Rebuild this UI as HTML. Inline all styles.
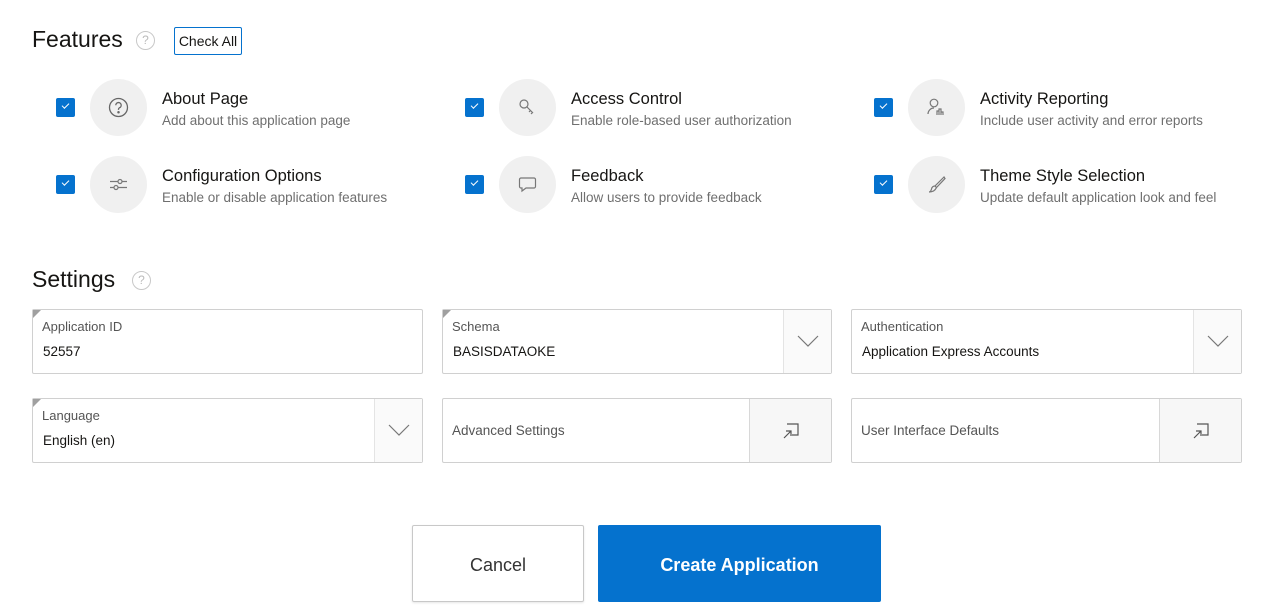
<!DOCTYPE html>
<html><head><meta charset="utf-8"><style>
*{box-sizing:border-box;margin:0;padding:0}
body{width:1288px;height:615px;background:#fff;font-family:"Liberation Sans",sans-serif;color:#161513;position:relative;overflow:hidden}
.a{position:absolute}
h2{position:absolute;font-weight:normal;font-size:23px;color:#161513}
.help{position:absolute;width:19px;height:19px;border:1.5px solid #c8c8c8;border-radius:50%;color:#bbb;font-size:12px;text-align:center;line-height:16px}
.cb{position:absolute;width:19px;height:19px;background:#0572ce;border-radius:2px}
.cb:after{content:"";position:absolute;left:6px;top:5px;width:6px;height:3px;border-left:1px solid #fff;border-bottom:1px solid #fff;transform:rotate(-45deg)}
.ic{position:absolute;width:57px;height:57px;border-radius:50%;background:#f0f0f0}
.ic svg{position:absolute;left:18px;top:18px}
.t{position:absolute;font-size:16.5px;color:#161513}
.d{position:absolute;font-size:13.5px;color:#6f6f6f}
.f{position:absolute;border:1px solid #d0d0d0;border-radius:2px;background:#fff;height:65px}
.f:before{content:"";position:absolute;left:0;top:0;border-top:8px solid #a0a0a0;border-right:8px solid transparent}
.f.n:before{display:none}
.lb{position:absolute;left:9px;top:9px;font-size:13px;color:#555}
.v{position:absolute;left:10px;top:34px;font-size:13.5px;color:#161513}
.dd{position:absolute;right:0;top:0;width:48px;height:63px;border-left:1px solid #e4e4e4;background:#fafafa}
.dd svg{position:absolute;left:13px;top:24px}
.pp{position:absolute;right:0;top:0;width:82px;height:63px;border-left:1px solid #d8d8d8;background:#f7f7f7}
.pp svg{position:absolute;left:32px;top:23px}
</style></head><body>
<h2 style="left:32px;top:26px">Features</h2>
<div class="help" style="left:136px;top:31px">?</div>
<div class="a" style="left:174px;top:27px;width:68px;height:28px;border:1px solid #0572ce;border-radius:2px;font-size:14px;line-height:26px;text-align:center;color:#161513">Check All</div>

<div class="cb" style="left:56px;top:98px"></div>
<div class="ic" style="left:90px;top:79px"><svg width="21" height="21" viewBox="0 0 21 21" fill="none" stroke="#666" stroke-width="1.3"><circle cx="10.5" cy="10.5" r="9"/><path d="M7.8 8.3a2.7 2.7 0 1 1 3.6 2.5c-.6.3-.9.8-.9 1.5v.6"/><circle cx="10.5" cy="15.2" r=".6" fill="#666"/></svg></div>
<div class="t" style="left:162px;top:90px">About Page</div>
<div class="d" style="left:162px;top:113px">Add about this application page</div>

<div class="cb" style="left:465px;top:98px"></div>
<div class="ic" style="left:499px;top:79px"><svg width="21" height="21" viewBox="0 0 21 21" fill="none" stroke="#777" stroke-width="1.2"><circle cx="7" cy="7" r="4"/><path d="M10 10l6 6M13.5 13.5l-1.5 1.5M15.5 15.5l-1.5 1.5"/></svg></div>
<div class="t" style="left:571px;top:90px">Access Control</div>
<div class="d" style="left:571px;top:113px">Enable role-based user authorization</div>

<div class="cb" style="left:874px;top:98px"></div>
<div class="ic" style="left:908px;top:79px"><svg width="21" height="21" viewBox="0 0 21 21" fill="none" stroke="#777" stroke-width="1.2"><circle cx="8" cy="6" r="3.8"/><path d="M2 17c0-3 2.5-6 6-6"/><path d="M11 18v-4h2v4M13 18v-6h2v6M15 18v-3h2v3"/></svg></div>
<div class="t" style="left:980px;top:90px">Activity Reporting</div>
<div class="d" style="left:980px;top:113px">Include user activity and error reports</div>

<div class="cb" style="left:56px;top:175px"></div>
<div class="ic" style="left:90px;top:156px"><svg width="21" height="21" viewBox="0 0 21 21" fill="none" stroke="#777" stroke-width="1.2"><path d="M2 7.5h17M2 13.5h17"/><circle cx="12" cy="7.5" r="2" fill="#f0f0f0"/><circle cx="8" cy="13.5" r="2" fill="#f0f0f0"/></svg></div>
<div class="t" style="left:162px;top:167px">Configuration Options</div>
<div class="d" style="left:162px;top:190px">Enable or disable application features</div>

<div class="cb" style="left:465px;top:175px"></div>
<div class="ic" style="left:499px;top:156px"><svg width="21" height="21" viewBox="0 0 21 21" fill="none" stroke="#777" stroke-width="1.2"><path d="M4 4h13a1.5 1.5 0 0 1 1.5 1.5v7a1.5 1.5 0 0 1-1.5 1.5H9l-4 3v-3H4a1.5 1.5 0 0 1-1.5-1.5v-7A1.5 1.5 0 0 1 4 4z"/></svg></div>
<div class="t" style="left:571px;top:167px">Feedback</div>
<div class="d" style="left:571px;top:190px">Allow users to provide feedback</div>

<div class="cb" style="left:874px;top:175px"></div>
<div class="ic" style="left:908px;top:156px"><svg width="21" height="21" viewBox="0 0 21 21" fill="none" stroke="#777" stroke-width="1.2"><path d="M18 3L9 12l1.5 1.5L19 4.5z"/><path d="M9 12c-2 0-3 1-3.5 3S4 18 3 18c3 0 6-1 7.5-4.5"/></svg></div>
<div class="t" style="left:980px;top:167px">Theme Style Selection</div>
<div class="d" style="left:980px;top:190px">Update default application look and feel</div>

<h2 style="left:32px;top:266px">Settings</h2>
<div class="help" style="left:132px;top:271px">?</div>

<div class="f" style="left:32px;top:309px;width:391px"><div class="lb">Application ID</div><div class="v">52557</div></div>
<div class="f" style="left:442px;top:309px;width:390px"><div class="lb">Schema</div><div class="v">BASISDATAOKE</div><div class="dd"><svg width="22" height="14" viewBox="0 0 22 14" fill="none" stroke="#777" stroke-width="1.2"><path d="M1 2l10 10 10-10"/></svg></div></div>
<div class="f n" style="left:851px;top:309px;width:391px"><div class="lb">Authentication</div><div class="v">Application Express Accounts</div><div class="dd"><svg width="22" height="14" viewBox="0 0 22 14" fill="none" stroke="#777" stroke-width="1.2"><path d="M1 2l10 10 10-10"/></svg></div></div>

<div class="f" style="left:32px;top:398px;width:391px"><div class="lb">Language</div><div class="v">English (en)</div><div class="dd"><svg width="22" height="14" viewBox="0 0 22 14" fill="none" stroke="#777" stroke-width="1.2"><path d="M1 2l10 10 10-10"/></svg></div></div>
<div class="f n" style="left:442px;top:398px;width:390px"><div class="lb" style="top:24px;font-size:13.5px">Advanced Settings</div><div class="pp"><svg width="18" height="18" viewBox="0 0 18 18" fill="none" stroke="#555" stroke-width="1.2"><path d="M5 2h11v11h-6"/><path d="M2 16l7-7M4 9h5v5"/></svg></div></div>
<div class="f n" style="left:851px;top:398px;width:391px"><div class="lb" style="top:24px;font-size:13.5px">User Interface Defaults</div><div class="pp"><svg width="18" height="18" viewBox="0 0 18 18" fill="none" stroke="#555" stroke-width="1.2"><path d="M5 2h11v11h-6"/><path d="M2 16l7-7M4 9h5v5"/></svg></div></div>

<div class="a" style="left:412px;top:525px;width:172px;height:77px;border:1px solid #c8c8c8;border-radius:2px;font-size:18px;color:#333;text-align:center;line-height:79px;box-shadow:0 1px 2px rgba(0,0,0,.1)">Cancel</div>
<div class="a" style="left:598px;top:525px;width:283px;height:77px;background:#0572ce;border-radius:2px;font-size:18px;font-weight:bold;color:#fff;text-align:center;line-height:81px">Create Application</div>
</body></html>
